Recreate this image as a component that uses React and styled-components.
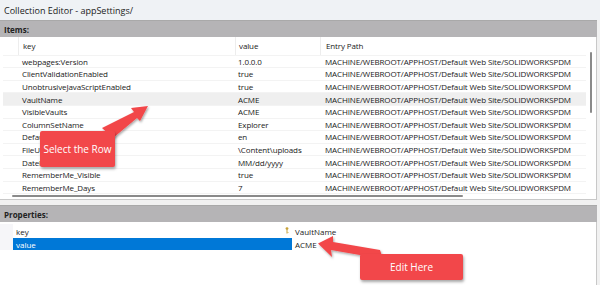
import React from 'react';
import styled, { createGlobalStyle } from 'styled-components';

const items = [
  { key: 'webpages:Version', value: '1.0.0.0' },
  { key: 'ClientValidationEnabled', value: 'true' },
  { key: 'UnobtrusiveJavaScriptEnabled', value: 'true' },
  { key: 'VaultName', value: 'ACME', hover: true },
  { key: 'VisibleVaults', value: 'ACME' },
  { key: 'ColumnSetName', value: 'Explorer' },
  { key: 'DefaultLanguage', value: 'en' },
  { key: 'FileUploadPath', value: '\\Content\\uploads' },
  { key: 'DateFormat', value: 'MM/dd/yyyy' },
  { key: 'RememberMe_Visible', value: 'true' },
  { key: 'RememberMe_Days', value: '7' },
];

const PATH = 'MACHINE/WEBROOT/APPHOST/Default Web Site/SOLIDWORKSPDM';

const GlobalStyle = createGlobalStyle`
  body {
    margin: 0;
    font-family: "Open Sans", "Noto Sans", sans-serif;
    color: #1a1a1a;
  }
`;

const Window = styled.div`
  position: relative;
  width: 600px;
  height: 285px;
  overflow: hidden;
  display: flex;
  flex-direction: column;
  background-color: #f1f1f1;
`;

const TitleBar = styled.div`
  height: 20px;
  display: flex;
  align-items: center;
  padding-left: 4px;
  background-color: #eff2f5;
  font-size: 9px;
  color: #222;
`;

const SectionHeader = styled.div`
  height: 17px;
  flex-shrink: 0;
  display: flex;
  align-items: center;
  padding-left: 4px;
  margin-right: 3px;
  background-color: #b5b4b6;
  border-top: 1px solid #a9a9a9;
  box-sizing: border-box;
  font-size: 8px;
  font-weight: 700;
  color: #222;
`;

const ItemsPanel = styled.div`
  position: relative;
  height: 163px;
  flex-shrink: 0;
  margin-right: 3px;
  background-color: #fff;
  border-right: 1px solid #c8c8c8;
  border-bottom: 1px solid #c8c8c8;
  box-sizing: border-box;
  overflow: hidden;
`;

const GridRow = styled.div`
  display: flex;
  height: ${(p) => (p.$head ? '18.6px' : '12.6px')};
  align-items: center;
  margin-left: 3px;
  margin-right: 10px;
  background-color: ${(p) => (p.$hover ? '#efefef' : 'transparent')};
  border-bottom: 1px solid #f3f3f3;
  box-sizing: border-box;
  font-size: 8px;
  letter-spacing: -0.12px;
  white-space: nowrap;
`;

const Cell = styled.div`
  width: ${(p) => p.$w}px;
  flex-shrink: 0;
  height: 100%;
  display: flex;
  align-items: center;
  padding-left: ${(p) => p.$pad || 4}px;
  box-sizing: border-box;
  overflow: hidden;
  border-left: ${(p) => (p.$line ? '1px solid #ededed' : 'none')};
`;

const VScroll = styled.div`
  position: absolute;
  left: 590px;
  top: 15px;
  width: 2px;
  height: 61px;
  background-color: #8a8a8a;
  border-radius: 1px;
`;

const HScroll = styled.div`
  position: absolute;
  left: 12px;
  top: 158px;
  width: 451px;
  height: 2px;
  background-color: #8a8a8a;
  border-radius: 1px;
`;

const Gap = styled.div`
  height: 5px;
  flex-shrink: 0;
`;

const PropsPanel = styled.div`
  flex: 1;
  margin-right: 3px;
  padding-top: 2px;
  background-color: #fff;
  border-right: 1px solid #c8c8c8;
`;

const PropRow = styled.div`
  display: flex;
  height: ${(p) => p.$h}px;
  align-items: center;
  font-size: 8px;
`;

const PropMargin = styled.div`
  width: 13px;
  height: 100%;
  background-color: #f6f6f9;
`;

const PropName = styled.div`
  width: 279px;
  height: 100%;
  display: flex;
  align-items: center;
  padding-left: 3px;
  box-sizing: border-box;
  background-color: ${(p) => (p.$selected ? '#0078d7' : 'transparent')};
  color: ${(p) => (p.$selected ? '#fff' : '#1a1a1a')};
`;

const PropValue = styled.div`
  position: relative;
  display: flex;
  align-items: center;
  padding-left: 3px;
`;

const KeyIcon = styled.svg`
  position: absolute;
  left: -7px;
  top: 1px;
`;

const Callout = styled.div`
  position: absolute;
  left: ${(p) => p.$x}px;
  top: ${(p) => p.$y}px;
  width: ${(p) => p.$w}px;
  height: ${(p) => p.$h}px;
  display: flex;
  align-items: center;
  justify-content: center;
  background-color: #f2474a;
  box-shadow: 1px 2px 3px rgba(0, 0, 0, 0.35);
  border-radius: 2px;
  color: #fff;
  font-size: 10px;
  font-family: "Open Sans", sans-serif;
`;

const ArrowLayer = styled.svg`
  position: absolute;
  left: 0;
  top: 0;
  pointer-events: none;
`;

const App = () => (
  <>
    <GlobalStyle />
    <Window>
      <TitleBar>Collection Editor - appSettings/</TitleBar>
      <SectionHeader>Items:</SectionHeader>
      <ItemsPanel>
        <GridRow $head>
          <Cell $w={15} />
          <Cell $w={217} $line>key</Cell>
          <Cell $w={85} $pad={3} $line>value</Cell>
          <Cell $w={265} $pad={5} $line>Entry Path</Cell>
        </GridRow>
        {items.map((it) => (
          <GridRow key={it.key} $hover={it.hover}>
            <Cell $w={15} />
            <Cell $w={217}>{it.key}</Cell>
            <Cell $w={85} $pad={3}>{it.value}</Cell>
            <Cell $w={265} $pad={5}>{PATH}</Cell>
          </GridRow>
        ))}
        <VScroll />
        <HScroll />
      </ItemsPanel>
      <Gap />
      <SectionHeader>Properties:</SectionHeader>
      <PropsPanel>
        <PropRow $h={14}>
          <PropMargin />
          <PropName>key</PropName>
          <PropValue>
            <KeyIcon width="4" height="7" viewBox="0 0 4 7">
              <circle cx="2" cy="1.6" r="1.4" fill="#c8a23a" />
              <rect x="1.5" y="2.5" width="1" height="4" fill="#c8a23a" />
              <rect x="2.5" y="5" width="1" height="0.8" fill="#c8a23a" />
            </KeyIcon>
            VaultName
          </PropValue>
        </PropRow>
        <PropRow $h={12}>
          <PropMargin />
          <PropName $selected>value</PropName>
          <PropValue>ACME</PropValue>
        </PropRow>
      </PropsPanel>

      <ArrowLayer width="600" height="285" viewBox="0 0 600 285">
        <defs>
          <filter id="sh" x="-20%" y="-20%" width="140%" height="140%">
            <feDropShadow dx="1" dy="1.5" stdDeviation="1.2" floodOpacity="0.35" />
          </filter>
        </defs>
        <polygon
          filter="url(#sh)"
          fill="#f2474a"
          points="102,128 113,138 137,118 140,121 148,106 131,108 134,112"
        />
        <polygon
          filter="url(#sh)"
          fill="#f2474a"
          points="380,250 383,259 331,250 332,257 318,243.5 333,236 333,242"
        />
      </ArrowLayer>
      <Callout $x={40} $y={131} $w={75} $h={36}>Select the Row</Callout>
      <Callout $x={360} $y={254} $w={103} $h={26}>Edit Here</Callout>
    </Window>
  </>
);

export default App;
